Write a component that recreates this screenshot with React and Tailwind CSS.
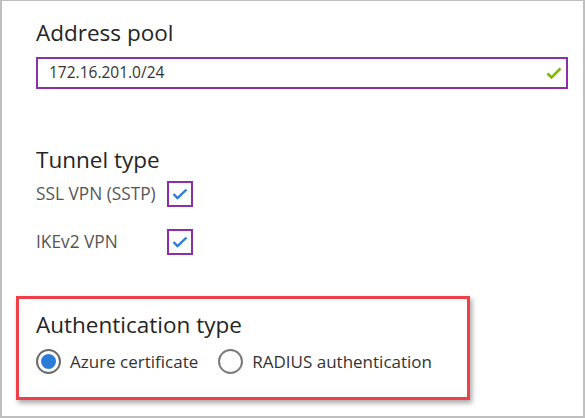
export default function App() {
  const font = { fontFamily: '"Open Sans", "Noto Sans", sans-serif' };
  return (
    <div className="w-[585px] h-[418px] bg-white border-[#bfbfbf] border-t border-l-2 border-r-2 border-b-2 box-border overflow-hidden" style={font}>
      <div className="pl-[34px] pt-[17px]">
        <div className="text-[22.5px] leading-[30px] text-[#252525]">Address pool</div>
        <div className="mt-[9px] w-[532px] h-[32px] border-2 border-[#8b30a8] flex items-center justify-between pl-[11px] pr-[4px]">
          <span className="text-[15.5px] text-[#333]">172.16.201.0/24</span>
          <svg width="16" height="13" viewBox="0 0 16 13">
            <path d="M1.5 6.5 L5.5 10.5 L14.5 1.5" fill="none" stroke="#7fba00" strokeWidth="2.6" />
          </svg>
        </div>
        <div className="mt-[56px] text-[22.5px] leading-[30px] text-[#252525]">Tunnel type</div>
        <div className="flex items-center mt-[6px]">
          <span className="w-[131px] text-[17.3px] text-[#555]">SSL VPN (SSTP)</span>
          <Check />
        </div>
        <div className="flex items-center mt-[22px]">
          <span className="w-[131px] text-[17.3px] text-[#555]">IKEv2 VPN</span>
          <Check />
        </div>
      </div>
      <div className="ml-[14px] mt-[41px] w-[454px] h-[104px] border-[3px] border-[#ef4049] shadow-[2px_3px_5px_rgba(0,0,0,0.35)] pl-[17px] pt-[11px]">
        <div className="text-[22.5px] leading-[30px] text-[#252525]">Authentication type</div>
        <div className="flex items-center mt-[9px]">
          <span className="w-[25px] h-[25px] rounded-full border-2 border-[#6b6b6b] flex items-center justify-center">
            <span className="w-[15px] h-[15px] rounded-full bg-[#2b7cd8]" />
          </span>
          <span className="ml-[9px] text-[17px] text-[#333]">Azure certificate</span>
          <span className="ml-[20px] w-[25px] h-[25px] rounded-full border-2 border-[#7a7a7a]" />
          <span className="ml-[9px] text-[17px] text-[#333]">RADIUS authentication</span>
        </div>
      </div>
    </div>
  );
}

function Check() {
  return (
    <span className="w-[26px] h-[26px] border-2 border-[#8b30a8] flex items-center justify-center">
      <svg width="16" height="12" viewBox="0 0 16 12">
        <path d="M1.5 6 L5.5 10 L14.5 1.5" fill="none" stroke="#2b7cd8" strokeWidth="2.4" />
      </svg>
    </span>
  );
}
